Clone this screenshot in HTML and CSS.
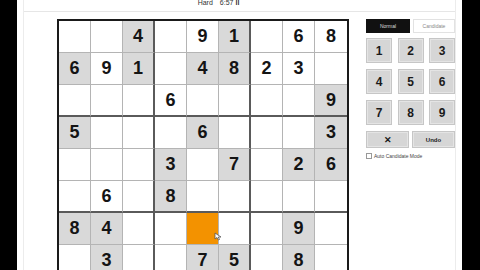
FILE: index.html
```html
<!DOCTYPE html>
<html lang="en">
<head>
    <meta charset="UTF-8">
    <title>Sudoku</title>
    <link rel="stylesheet" href="styles.css">
</head>
<body>
    <div class="side-left"></div>
    <div class="screen">
        <div class="frame">
            <div class="top">
                <span class="level">Hard</span>
                <span class="timer">6:57</span>
                <span class="pause">ll</span>
            </div>
            <div class="main">
                <div class="board">
                    <!-- row 1 -->
                    <div class="cell"></div><div class="cell"></div><div class="cell hl c3">4</div>
                    <div class="cell"></div><div class="cell">9</div><div class="cell hl c6">1</div>
                    <div class="cell"></div><div class="cell">6</div><div class="cell c9">8</div>
                    <!-- row 2 -->
                    <div class="cell hl">6</div><div class="cell">9</div><div class="cell hl c3">1</div>
                    <div class="cell"></div><div class="cell hl">4</div><div class="cell hl c6">8</div>
                    <div class="cell">2</div><div class="cell">3</div><div class="cell c9"></div>
                    <!-- row 3 -->
                    <div class="cell r3"></div><div class="cell r3"></div><div class="cell r3 c3"></div>
                    <div class="cell r3">6</div><div class="cell r3"></div><div class="cell r3 c6"></div>
                    <div class="cell r3"></div><div class="cell r3"></div><div class="cell r3 hl c9">9</div>
                    <!-- row 4 -->
                    <div class="cell hl">5</div><div class="cell"></div><div class="cell c3"></div>
                    <div class="cell"></div><div class="cell hl">6</div><div class="cell c6"></div>
                    <div class="cell"></div><div class="cell"></div><div class="cell hl c9">3</div>
                    <!-- row 5 -->
                    <div class="cell"></div><div class="cell"></div><div class="cell c3"></div>
                    <div class="cell hl">3</div><div class="cell"></div><div class="cell hl c6">7</div>
                    <div class="cell"></div><div class="cell hl">2</div><div class="cell hl c9">6</div>
                    <!-- row 6 -->
                    <div class="cell r3"></div><div class="cell r3">6</div><div class="cell r3 c3"></div>
                    <div class="cell r3 hl">8</div><div class="cell r3"></div><div class="cell r3 c6"></div>
                    <div class="cell r3"></div><div class="cell r3"></div><div class="cell r3 c9"></div>
                    <!-- row 7 -->
                    <div class="cell hl">8</div><div class="cell hl">4</div><div class="cell c3"></div>
                    <div class="cell"></div><div class="cell selected"></div><div class="cell c6"></div>
                    <div class="cell"></div><div class="cell hl">9</div><div class="cell c9"></div>
                    <!-- row 8 -->
                    <div class="cell"></div><div class="cell hl">3</div><div class="cell c3"></div>
                    <div class="cell"></div><div class="cell hl">7</div><div class="cell hl c6">5</div>
                    <div class="cell"></div><div class="cell hl">8</div><div class="cell c9"></div>
                    <!-- row 9 -->
                    <div class="cell"></div><div class="cell"></div><div class="cell c3"></div>
                    <div class="cell"></div><div class="cell"></div><div class="cell c6"></div>
                    <div class="cell"></div><div class="cell"></div><div class="cell c9"></div>
                    <svg class="cursor" width="8" height="9" viewBox="0 0 8 9">
                        <path d="M1 1 L1 7 L3 5.5 L4.5 8 L5.5 7.5 L4.3 5 L7 5 Z" fill="#fff" stroke="#555" stroke-width="0.8"/>
                    </svg>
                </div>
                <div class="panel">
                    <div class="tabs">
                        <div class="tab active">Normal</div>
                        <div class="tab">Candidate</div>
                    </div>
                    <div class="keys">
                        <button class="key">1</button>
                        <button class="key">2</button>
                        <button class="key">3</button>
                        <button class="key">4</button>
                        <button class="key">5</button>
                        <button class="key">6</button>
                        <button class="key">7</button>
                        <button class="key">8</button>
                        <button class="key">9</button>
                    </div>
                    <div class="actions">
                        <button class="act">&#x2715;</button>
                        <button class="act undo">Undo</button>
                    </div>
                    <label class="auto"><span class="box"></span>Auto Candidate Mode</label>
                </div>
            </div>
        </div>
    </div>
    <div class="side-right"></div>
</body>
</html>
```

FILE: styles.css
```css
body {
    margin: 0;
    width: 480px;
    height: 270px;
    overflow: hidden;
    display: flex;
    background: #fff;
    font-family: "Liberation Sans", Arial, sans-serif;
}
.side-left {
    width: 17px;
    background: #000;
}
.side-right {
    width: 18px;
    background: #000;
}
.screen {
    flex: 1;
    padding: 0 6px;
}
.frame {
    height: 100%;
    border-left: 1px solid #ececec;
    border-right: 1px solid #ececec;
}
.top {
    height: 11px;
    border-bottom: 1px solid #e6e6e6;
    display: flex;
    justify-content: center;
    gap: 7px;
    font-size: 7px;
    line-height: 7px;
    color: #333;
    overflow: hidden;
    padding-right: 42px;
}
.top span {
    margin-top: -1px;
}
.top .pause {
    margin-left: -5px;
    font-weight: bold;
}
.main {
    display: flex;
    padding: 7px 0 0 33px;
}
.board {
    position: relative;
    display: grid;
    grid-template-columns: repeat(9, 32px);
    grid-template-rows: repeat(9, 32px);
    border: 2px solid #1a1a1a;
    flex-shrink: 0;
}
.cell {
    box-sizing: border-box;
    border-right: 1px solid #b4b4b4;
    border-bottom: 1px solid #b4b4b4;
    display: flex;
    align-items: center;
    justify-content: center;
    font-size: 18px;
    font-weight: bold;
    color: #141414;
}
.cell.c3, .cell.c6 {
    border-right: 2px solid #5a5a5a;
}
.cell.c9 {
    border-right: none;
}
.cell.r3 {
    border-bottom: 2px solid #5a5a5a;
}
.cell.hl {
    background: #d9d9d9;
}
.cell.selected {
    background: #f39200;
}
.cursor {
    position: absolute;
    left: 155px;
    top: 211px;
}
.panel {
    margin-left: 17px;
    width: 89px;
}
.tabs {
    display: flex;
    justify-content: space-between;
    height: 14px;
}
.tab {
    width: 42px;
    box-sizing: border-box;
    border: 1px solid #e2e2e2;
    font-size: 5px;
    line-height: 12px;
    text-align: center;
    color: #888;
}
.tab.active {
    width: 44px;
    background: #111;
    border-color: #111;
    color: #ddd;
}
.keys {
    margin-top: 5px;
    display: grid;
    grid-template-columns: repeat(3, 26px);
    grid-auto-rows: 25px;
    column-gap: 5.5px;
    row-gap: 6px;
}
button {
    margin: 0;
    padding: 0;
    font-family: "Liberation Sans", Arial, sans-serif;
    background: #d6d6d6;
    border: 1px solid #c6c6c6;
    box-shadow: inset 0 0 0 1px #e4e4e4;
    color: #1a1a1a;
    font-weight: bold;
}
.key {
    font-size: 12px;
}
.actions {
    margin-top: 6px;
    display: flex;
    justify-content: space-between;
}
.act {
    width: 43px;
    height: 17px;
    font-size: 9px;
}
.act.undo {
    font-size: 6px;
}
.auto {
    margin-top: 5px;
    display: flex;
    align-items: center;
    gap: 2px;
    font-size: 5px;
    color: #444;
}
.box {
    width: 4px;
    height: 4px;
    border: 1px solid #999;
}
```
